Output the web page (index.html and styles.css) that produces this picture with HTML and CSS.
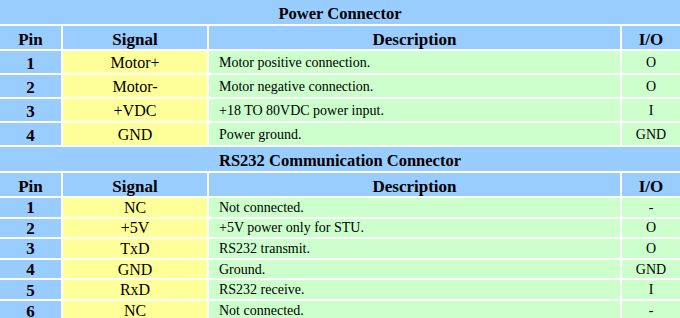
FILE: index.html
```html
<!DOCTYPE html>
<html>
<head>
<meta charset="utf-8">
<link rel="stylesheet" href="styles.css">
</head>
<body>
<table class="pins">
  <colgroup>
    <col class="c-pin"><col class="c-sig"><col class="c-desc"><col class="c-io">
  </colgroup>
  <tr class="title"><td colspan="4">Power Connector</td></tr>
  <tr class="head"><td>Pin</td><td>Signal</td><td>Description</td><td>I/O</td></tr>
  <tr class="row pw"><td class="pin">1</td><td class="sig">Motor+</td><td class="desc">Motor positive connection.</td><td class="io">O</td></tr>
  <tr class="row pw"><td class="pin">2</td><td class="sig">Motor-</td><td class="desc">Motor negative connection.</td><td class="io">O</td></tr>
  <tr class="row pw"><td class="pin">3</td><td class="sig">+VDC</td><td class="desc">+18 TO 80VDC power input.</td><td class="io">I</td></tr>
  <tr class="row pw"><td class="pin">4</td><td class="sig">GND</td><td class="desc">Power ground.</td><td class="io">GND</td></tr>
  <tr class="title t2"><td colspan="4">RS232 Communication Connector</td></tr>
  <tr class="head h2"><td>Pin</td><td>Signal</td><td>Description</td><td>I/O</td></tr>
  <tr class="row rs"><td class="pin">1</td><td class="sig">NC</td><td class="desc">Not connected.</td><td class="io">-</td></tr>
  <tr class="row rs"><td class="pin">2</td><td class="sig">+5V</td><td class="desc">+5V power only for STU.</td><td class="io">O</td></tr>
  <tr class="row rs"><td class="pin">3</td><td class="sig">TxD</td><td class="desc">RS232 transmit.</td><td class="io">O</td></tr>
  <tr class="row rs"><td class="pin">4</td><td class="sig">GND</td><td class="desc">Ground.</td><td class="io">GND</td></tr>
  <tr class="row rs"><td class="pin">5</td><td class="sig">RxD</td><td class="desc">RS232 receive.</td><td class="io">I</td></tr>
  <tr class="row rs"><td class="pin">6</td><td class="sig">NC</td><td class="desc">Not connected.</td><td class="io">-</td></tr>
</table>
</body>
</html>
```

FILE: styles.css
```css
html, body {
  margin: 0;
  padding: 0;
  background: #ffffff;
}
body {
  font-family: "Liberation Serif", "Times New Roman", serif;
  color: #000;
}
.pins {
  width: 680px;
  border-collapse: collapse;
  border-style: hidden;
  table-layout: fixed;
}
.c-pin { width: 62px; }
.c-sig { width: 146px; }
.c-desc { width: 413px; }
.c-io { width: 59px; }
.pins td {
  border: 2px solid #ffffff;
  padding: 0;
  text-align: center;
  vertical-align: middle;
  white-space: nowrap;
  line-height: 1;
  box-sizing: border-box;
}
.title td {
  background: #99ccff;
  font-weight: bold;
  font-size: 16.5px;
  height: 25px;
  padding-top: 5px;
}
.t2 td { height: 26px; padding-top: 4px; }
.head td {
  background: #99ccff;
  font-weight: bold;
  font-size: 17px;
  height: 25px;
  padding-top: 3px;
}
.row td.pin {
  background: #99ccff;
  font-weight: bold;
  font-size: 17px;
}
.row td.sig {
  background: #ffff99;
  font-size: 16px;
}
.row td.desc {
  background: #ccffcc;
  font-size: 14px;
  text-align: left;
  padding-left: 10px;
}
.row td.io {
  background: #ccffcc;
  font-size: 14px;
}
.pw td { height: 24px; padding-top: 2px; }
.rs td { height: 20.6px; padding-top: 1px; }
```
